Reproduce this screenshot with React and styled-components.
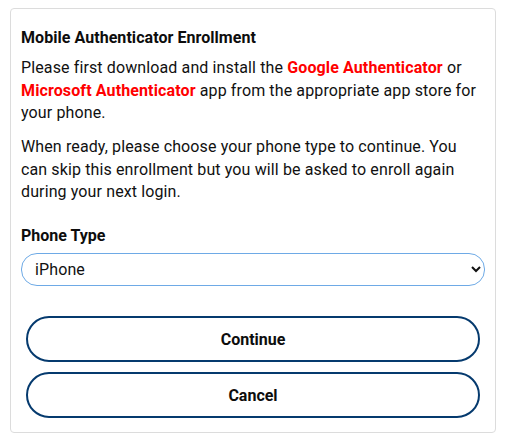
import React from "react";
import styled, { createGlobalStyle } from "styled-components";

const Global = createGlobalStyle`
  body {
    margin: 8px;
    background: #fff;
    font-family: Roboto, "Liberation Sans", sans-serif;
    color: #111;
  }
  * { box-sizing: border-box; }
`;

const Wrap = styled.div`
  padding: 0 2px;
`;

const Card = styled.div`
  border: 1px solid #dcdcdc;
  border-radius: 4px;
  padding: 18px 10px 14px;
  display: flex;
  flex-direction: column;
`;

const Title = styled.h1`
  margin: 0 0 8px;
  font-size: 16px;
  line-height: 22px;
  font-weight: 700;
  color: #0d0d0d;
  letter-spacing: 0.05px;
`;

const Para = styled.p`
  margin: 0 0 11.5px;
  font-size: 16px;
  line-height: 22.5px;
  color: #111;
  letter-spacing: 0.12px;
`;

const Brand = styled.span`
  color: #ff0000;
  font-weight: 700;
`;

const Label = styled.label`
  margin-top: 10px;
  font-size: 16px;
  line-height: 22px;
  font-weight: 700;
  color: #0d0d0d;
`;

const Select = styled.select`
  margin-top: 6px;
  height: 33px;
  width: 100%;
  border: 1px solid #6eaae6;
  border-radius: 16px;
  padding: 0 10px 0 9px;
  font-family: Roboto, "Liberation Sans", sans-serif;
  font-size: 16px;
  letter-spacing: 0.12px;
  color: #111;
  background: #fff;
`;

const Buttons = styled.div`
  margin: 30px 5px 0;
  display: flex;
  flex-direction: column;
  gap: 10px;
`;

const Button = styled.button`
  height: 46px;
  width: 100%;
  border: 2px solid #053a6e;
  border-radius: 23px;
  background: #fff;
  font-family: Roboto, "Liberation Sans", sans-serif;
  font-size: 16px;
  font-weight: 700;
  color: #0d0d0d;
  cursor: pointer;
`;

export default function App() {
  return (
    <Wrap>
      <Global />
      <Card>
        <Title>Mobile Authenticator Enrollment</Title>
        <Para>
          Please first download and install the <Brand>Google Authenticator</Brand> or{" "}
          <Brand>Microsoft Authenticator</Brand> app from the appropriate app store for
          your phone.
        </Para>
        <Para>
          When ready, please choose your phone type to continue. You can skip this
          enrollment but you will be asked to enroll again during your next login.
        </Para>
        <Label htmlFor="phoneType">Phone Type</Label>
        <Select id="phoneType" defaultValue="iPhone">
          <option value="iPhone">iPhone</option>
          <option value="Android">Android</option>
        </Select>
        <Buttons>
          <Button type="button">Continue</Button>
          <Button type="button">Cancel</Button>
        </Buttons>
      </Card>
    </Wrap>
  );
}
